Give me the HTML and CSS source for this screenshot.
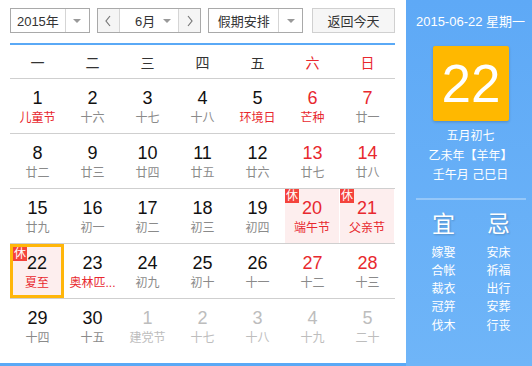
FILE: index.html
```html
<!DOCTYPE html>
<html lang="zh-CN">
<head>
  <meta charset="UTF-8">
  <title>万年历</title>
  <link rel="stylesheet" href="styles.css">
</head>
<body>
  <div class="calendar">
    <div class="main">
      <div class="toolbar">
        <div class="select year">
          <span class="label">2015年</span>
          <span class="drop"><i class="caret"></i></span>
        </div>
        <div class="select month">
          <span class="arrow">
            <svg width="8" height="12" viewBox="0 0 8 12"><polyline points="6,1 2,6 6,11" fill="none" stroke="#777" stroke-width="1.2"/></svg>
          </span>
          <span class="label">6月</span>
          <span class="drop plain"><i class="caret"></i></span>
          <span class="arrow">
            <svg width="8" height="12" viewBox="0 0 8 12"><polyline points="2,1 6,6 2,11" fill="none" stroke="#777" stroke-width="1.2"/></svg>
          </span>
        </div>
        <div class="select holiday">
          <span class="label">假期安排</span>
          <span class="drop"><i class="caret"></i></span>
        </div>
        <button class="today-btn">返回今天</button>
      </div>

      <div class="weekhead">
        <span>一</span><span>二</span><span>三</span><span>四</span><span>五</span>
        <span class="red">六</span><span class="red">日</span>
      </div>

      <div class="week">
        <div class="day"><span class="num">1</span><span class="lunar fest">儿童节</span></div>
        <div class="day"><span class="num">2</span><span class="lunar">十六</span></div>
        <div class="day"><span class="num">3</span><span class="lunar">十七</span></div>
        <div class="day"><span class="num">4</span><span class="lunar">十八</span></div>
        <div class="day"><span class="num">5</span><span class="lunar fest">环境日</span></div>
        <div class="day weekend"><span class="num">6</span><span class="lunar fest">芒种</span></div>
        <div class="day weekend"><span class="num">7</span><span class="lunar">廿一</span></div>
      </div>
      <div class="week">
        <div class="day"><span class="num">8</span><span class="lunar">廿二</span></div>
        <div class="day"><span class="num">9</span><span class="lunar">廿三</span></div>
        <div class="day"><span class="num">10</span><span class="lunar">廿四</span></div>
        <div class="day"><span class="num">11</span><span class="lunar">廿五</span></div>
        <div class="day"><span class="num">12</span><span class="lunar">廿六</span></div>
        <div class="day weekend"><span class="num">13</span><span class="lunar">廿七</span></div>
        <div class="day weekend"><span class="num">14</span><span class="lunar">廿八</span></div>
      </div>
      <div class="week">
        <div class="day"><span class="num">15</span><span class="lunar">廿九</span></div>
        <div class="day"><span class="num">16</span><span class="lunar">初一</span></div>
        <div class="day"><span class="num">17</span><span class="lunar">初二</span></div>
        <div class="day"><span class="num">18</span><span class="lunar">初三</span></div>
        <div class="day"><span class="num">19</span><span class="lunar">初四</span></div>
        <div class="day weekend rest"><b class="badge">休</b><span class="num">20</span><span class="lunar fest">端午节</span></div>
        <div class="day weekend rest"><b class="badge">休</b><span class="num">21</span><span class="lunar fest">父亲节</span></div>
      </div>
      <div class="week">
        <div class="day rest today"><b class="badge">休</b><span class="num">22</span><span class="lunar fest">夏至</span></div>
        <div class="day"><span class="num">23</span><span class="lunar fest">奥林匹...</span></div>
        <div class="day"><span class="num">24</span><span class="lunar">初九</span></div>
        <div class="day"><span class="num">25</span><span class="lunar">初十</span></div>
        <div class="day"><span class="num">26</span><span class="lunar">十一</span></div>
        <div class="day weekend"><span class="num">27</span><span class="lunar">十二</span></div>
        <div class="day weekend"><span class="num">28</span><span class="lunar">十三</span></div>
      </div>
      <div class="week last">
        <div class="day"><span class="num">29</span><span class="lunar">十四</span></div>
        <div class="day"><span class="num">30</span><span class="lunar">十五</span></div>
        <div class="day other"><span class="num">1</span><span class="lunar">建党节</span></div>
        <div class="day other"><span class="num">2</span><span class="lunar">十七</span></div>
        <div class="day other"><span class="num">3</span><span class="lunar">十八</span></div>
        <div class="day other"><span class="num">4</span><span class="lunar">十九</span></div>
        <div class="day other"><span class="num">5</span><span class="lunar">二十</span></div>
      </div>
    </div>

    <div class="side">
      <p class="side-date">2015-06-22 星期一</p>
      <div class="big-day">22</div>
      <p class="side-info">五月初七</p>
      <p class="side-info">乙未年【羊年】</p>
      <p class="side-info">壬午月 己巳日</p>
      <hr>
      <div class="almanac">
        <div class="col">
          <h2>宜</h2>
          <span>嫁娶</span><span>合帐</span><span>裁衣</span><span>冠笄</span><span>伐木</span>
        </div>
        <div class="col">
          <h2>忌</h2>
          <span>安床</span><span>祈福</span><span>出行</span><span>安葬</span><span>行丧</span>
        </div>
      </div>
    </div>
  </div>
</body>
</html>
```

FILE: styles.css
```css
body {
  margin: 0;
  font-family: "Liberation Sans", "Noto Sans CJK SC", sans-serif;
  background-color: white;
}

.calendar {
  display: flex;
  width: 532px;
  height: 366px;
}

.main {
  width: 406px;
  height: 366px;
  box-sizing: border-box;
  border-bottom: 3px solid #5aa9f6;
  padding: 8px 11px 0 10px;
}

/* toolbar */
.toolbar {
  display: flex;
  height: 25px;
}

.select {
  display: flex;
  height: 25px;
  box-sizing: border-box;
  border: 1px solid #a9a9a9;
  font-size: 13px;
  color: #333;
  background-color: white;
}

.select .label {
  flex: 1;
  display: flex;
  align-items: center;
  justify-content: center;
}

.select .drop {
  width: 23px;
  border-left: 1px solid #d5d5d5;
  display: flex;
  align-items: center;
  justify-content: center;
}

.select .drop.plain {
  border-left: none;
  width: 22px;
}

.caret {
  width: 0;
  height: 0;
  border-left: 4px solid transparent;
  border-right: 4px solid transparent;
  border-top: 4px solid #999;
}

.year {
  width: 80px;
}

.month {
  width: 105px;
  margin-left: 7px;
}

.month .label {
  padding-left: 14px;
}

.month .arrow {
  width: 21px;
  background-color: #f5f5f5;
  display: flex;
  align-items: center;
  justify-content: center;
}

.month .arrow:first-child {
  border-right: 1px solid #d5d5d5;
}

.month .arrow:last-child {
  border-left: 1px solid #d5d5d5;
}

.holiday {
  width: 95px;
  margin-left: 7px;
}

.today-btn {
  width: 83px;
  height: 25px;
  margin-left: 9px;
  border: 1px solid #d0d0d0;
  background-color: #f6f6f6;
  font-family: "Liberation Sans", "Noto Sans CJK SC", sans-serif;
  font-size: 13px;
  color: #333;
  padding: 0;
}

/* grid */
.weekhead {
  display: grid;
  grid-template-columns: repeat(7, 55px);
  margin-top: 10px;
  height: 36px;
  box-sizing: border-box;
  border-top: 2px solid #5aa9f6;
  border-bottom: 1px solid #cfcfcf;
  align-items: center;
  text-align: center;
  font-size: 14px;
  color: #333;
}

.weekhead .red {
  color: #e8282e;
}

.week {
  display: grid;
  grid-template-columns: repeat(7, 55px);
  height: 55px;
  box-sizing: border-box;
  border-bottom: 1px solid #cfcfcf;
}

.week.last {
  border-bottom: none;
}

.day {
  position: relative;
  display: flex;
  flex-direction: column;
  align-items: center;
  padding-top: 9px;
}

.num {
  font-size: 18px;
  line-height: 20px;
  color: #111;
}

.lunar {
  font-size: 12px;
  line-height: 16px;
  margin-top: 2px;
  color: #8a8a8a;
  white-space: nowrap;
}

.lunar.fest {
  color: #e8282e;
}

.weekend .num {
  color: #e8282e;
}

.other .num, .other .lunar {
  color: #bdbdbd;
}

.rest {
  background-color: #fdeeee;
  margin-right: 1px;
}

.badge {
  position: absolute;
  left: 0;
  top: 0;
  width: 14px;
  height: 14px;
  background-color: #f4433c;
  color: white;
  font-size: 12px;
  font-weight: normal;
  line-height: 14px;
  text-align: center;
}

.today {
  border: 3px solid #ffb60a;
  padding-top: 6px;
  margin-right: 1px;
}

/* right panel */
.side {
  width: 126px;
  height: 366px;
  background: linear-gradient(#5ea9f6, #6fb5f8);
  color: white;
  display: flex;
  flex-direction: column;
  align-items: center;
}

.side-date {
  margin: 14px 0 0 3px;
  font-size: 13px;
  line-height: 16px;
}

.big-day {
  width: 76px;
  height: 75px;
  margin: 16px 0 6px 4px;
  background-color: #ffb800;
  border-radius: 2px;
  box-shadow: 0 1px 3px rgba(0, 0, 0, 0.2);
  font-size: 53px;
  line-height: 75px;
  text-align: center;
}

.side-info {
  margin: 0 0 0 3px;
  font-size: 12px;
  line-height: 19.5px;
}

.side hr {
  width: 110px;
  border: 0;
  height: 2px;
  background-color: rgba(255, 255, 255, 0.3);
  margin: 12px 0 0 4px;
}

.almanac {
  display: flex;
  gap: 0;
  margin: 12px 0 0 4px;
}

.almanac .col {
  width: 55px;
  display: flex;
  flex-direction: column;
  align-items: center;
}

.almanac h2 {
  margin: 0 0 8px;
  font-size: 23px;
  line-height: 24px;
  font-weight: normal;
  text-shadow: 1px 1px 2px rgba(0, 0, 0, 0.2);
}

.almanac span {
  font-size: 12px;
  line-height: 18.3px;
}
```
